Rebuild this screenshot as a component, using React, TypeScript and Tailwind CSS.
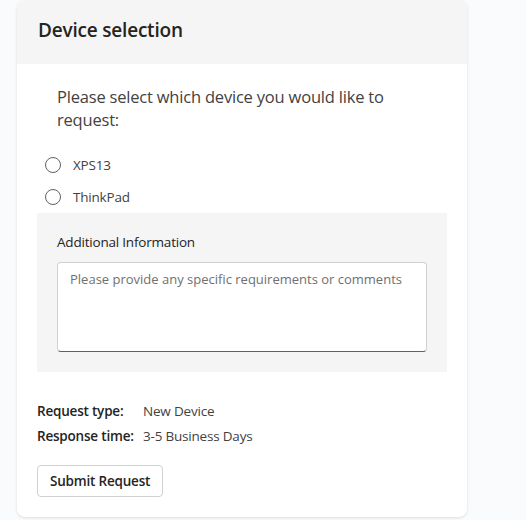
export default function App() {
  return (
    <div className="min-h-screen bg-[#fafbfd] font-['Open_Sans',sans-serif]">
      <div className="ml-[17px] w-[450px] overflow-hidden rounded-lg bg-white shadow-[0_1px_3px_rgba(0,0,0,0.12)]">
        {/* HEADER */}
        <div className="flex h-[64px] items-center bg-[#f5f5f5] px-[21px] pb-[3px]">
          <h1 className="text-[19px] font-semibold tracking-[-0.2px] text-[#242424]">
            Device selection
          </h1>
        </div>

        <div className="px-5 pb-5">
          <p className="px-5 pt-[21px] text-[16.5px] leading-[23px] tracking-[-0.2px] text-[#424242]">
            Please select which device you would like to request:
          </p>

          <div className="mt-[18px] flex flex-col">
            {["XPS13", "ThinkPad"].map((d) => (
              <label key={d} className="flex h-[32px] items-center gap-[12px] pl-2 text-[13.5px] tracking-[-0.2px] text-[#424242]">
                <span className="h-[16px] w-[16px] rounded-full border border-[#616161]" />
                {d}
              </label>
            ))}
          </div>

          {/* ADDITIONAL INFO */}
          <div className="bg-[#f5f5f5] px-5 pb-5 pt-[19px]">
            <p className="text-[13.5px] leading-[20px] tracking-[-0.2px] text-[#242424]">
              Additional Information
            </p>
            <div className="mt-[10px] h-[90px] rounded border border-[#d1d1d1] border-b-[#616161] bg-white px-3 pt-[7px] text-[13px] whitespace-nowrap text-[#707070]">
              Please provide any specific requirements or comments
            </div>
          </div>

          {/* DETAILS */}
          <div className="mt-[29px] flex flex-col gap-[5px] text-[13.5px] leading-[20px] tracking-[-0.2px] text-[#242424]">
            <div className="flex">
              <span className="w-[106px] font-semibold">Request type:</span>
              <span className="text-[#424242]">New Device</span>
            </div>
            <div className="flex">
              <span className="w-[106px] font-semibold">Response time:</span>
              <span className="text-[#424242]">3-5 Business Days</span>
            </div>
          </div>

          <button className="mt-[19px] h-[32px] rounded border border-[#d1d1d1] bg-white px-3 text-[13.5px] font-semibold tracking-[-0.2px] text-[#242424]">
            Submit Request
          </button>
        </div>
      </div>
    </div>
  );
}
